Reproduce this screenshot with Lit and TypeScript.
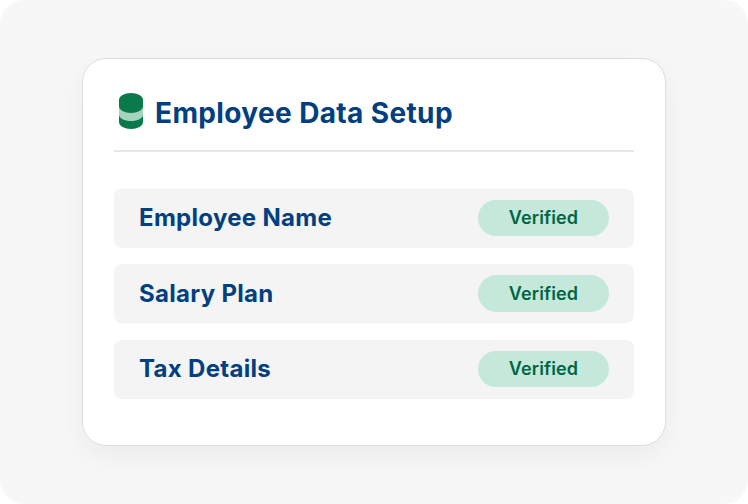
import { LitElement, html, css } from "lit";
import { customElement } from "lit/decorators.js";

@customElement("app-root")
export class AppRoot extends LitElement {
  static styles = css`
    :host { display: block; width: 748px; height: 504px; background: #fff; font-family: Inter, "Liberation Sans", sans-serif; }
    .panel { width: 748px; height: 504px; box-sizing: border-box; background: #f7f7f7; border-radius: 24px; display: flex; padding: 58px 82px; }
    .card { width: 584px; height: 388px; box-sizing: border-box; background: #fff; border: 1px solid #dedee3; border-radius: 24px; padding: 31px; box-shadow: 0 10px 30px rgba(0,0,0,0.05); display: flex; flex-direction: column; }
    .head { display: flex; align-items: flex-start; gap: 12px; height: 62px; padding: 3px 0 0 5px; box-sizing: border-box; border-bottom: 2px solid #e6e6f0; }
    .head svg { display: block; flex: none; }
    h1 { margin: 3px 0 0; font-size: 28px; line-height: 34px; font-weight: 700; letter-spacing: 0.37px; color: #004080; }
    .rows { display: flex; flex-direction: column; gap: 16.5px; margin-top: 36.7px; }
    .row { height: 59px; box-sizing: border-box; background: #f4f4f5; border-radius: 8px; display: flex; align-items: center; justify-content: space-between; padding: 0 25px; }
    .label { font-size: 24px; line-height: 29px; margin-top: -1px; font-weight: 650; letter-spacing: 0.3px; color: #004080; }
    .badge { width: 131px; height: 36.5px; box-sizing: border-box; padding-bottom: 1px; border-radius: 19px; background: #c4e8da; color: #006644; font-size: 18px; font-weight: 600; letter-spacing: 0.12px; display: flex; align-items: center; justify-content: center; }
  `;
  render() {
    const rows = ["Employee Name", "Salary Plan", "Tax Details"];
    return html`<div class="panel"><div class="card">
      <div class="head">
        <svg width="24" height="36" viewBox="0 0 24 36">
          <path d="M0 20v9c0 3.900 5.400 7 12 7s12-3.100 12-7v-9z" fill="#0a7a4a"/>
          <path d="M0 10v12c0 3.300 5.400 6 12 6s12-2.700 12-6V10z" fill="#a5d3bd"/>
          <path d="M0 7v6c0 3.900 5.400 7 12 7s12-3.100 12-7V7c0-3.900-5.400-7-12-7S0 3.100 0 7z" fill="#0a7a4a"/>
        </svg>
        <h1>Employee Data Setup</h1>
      </div>
      <div class="rows">
        ${rows.map((r) => html`<div class="row"><span class="label">${r}</span><span class="badge">Verified</span></div>`)}
      </div>
    </div></div>`;
  }
}
